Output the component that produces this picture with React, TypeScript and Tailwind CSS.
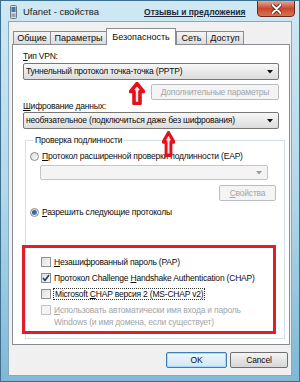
import type { ReactNode } from "react";

const font = "font-['Liberation_Sans',Arial,sans-serif]";
const txt = "text-[8.5px] tracking-[-0.2px] leading-[11px]";

function U({ children }: { children: ReactNode }) {
    return <span className="underline underline-offset-1">{children}</span>;
}

function Combo({ text, disabled }: { text?: ReactNode; disabled?: boolean }) {
    return (
        <div
            className={`flex h-full items-center rounded-[2px] border pl-[2px] pr-[5px] ${disabled
                ? "border-[#c2c5c9] bg-[#f4f4f4]"
                : "border-[#777] bg-linear-to-b from-[#f7f7f7] to-[#dcdcdc]"
                }`}
        >
            <span className={`flex-1 truncate ${txt}`}>{text}</span>
            <svg width="6" height="4" viewBox="0 0 6 4">
                <path d="M0 0 L6 0 L3 3.5 Z" fill={disabled ? "#9a9a9a" : "#111"} />
            </svg>
        </div>
    );
}

function Btn({ children, w, disabled }: { children: ReactNode; w: string; disabled?: boolean }) {
    return (
        <div
            className={`${w} flex h-[16px] items-center justify-center rounded-[2px] border ${txt} ${disabled
                ? "border-[#b9bdc1] bg-[#f4f4f4] text-[#a3a6a9]"
                : "border-[#707070] bg-linear-to-b from-[#f4f4f4] to-[#d6d6d6]"
                }`}
        >
            {children}
        </div>
    );
}

function Radio({ on }: { on?: boolean }) {
    return (
        <div className="flex h-[9px] w-[9px] shrink-0 items-center justify-center rounded-full border border-[#8a8a8a] bg-linear-to-br from-[#dcdcdc] to-[#ffffff]">
            {on && <div className="h-[5px] w-[5px] rounded-full bg-linear-to-br from-[#2a4f6b] to-[#4a8fbf]" />}
        </div>
    );
}

function Check({ on, disabled }: { on?: boolean; disabled?: boolean }) {
    return (
        <div
            className={`flex h-[10px] w-[10px] shrink-0 items-center justify-center border ${disabled
                ? "border-[#c4c4c4] bg-[#f4f4f4]"
                : "border-[#8f8f8f] bg-linear-to-br from-[#dedede] to-[#fafafa]"
                }`}
        >
            {on && (
                <svg width="8" height="8" viewBox="0 0 8 8">
                    <path d="M1 4 L3 6.5 L7 1" stroke="#1f3b73" strokeWidth="1.6" fill="none" />
                </svg>
            )}
        </div>
    );
}

function UpArrow({ w, h }: { w: number; h: number }) {
    return (
        <svg width={w} height={h} viewBox="0 0 16 24" preserveAspectRatio="none">
            <path
                d="M8 1.5 L14.5 10 L11 10 L11 22.5 L5 22.5 L5 10 L1.5 10 Z"
                fill="#fbe3e3"
                stroke="#e3111c"
                strokeWidth="3.6"
                strokeLinejoin="round"
            />
        </svg>
    );
}

const tabs = [
    { name: "Общие", w: "w-[37px]" },
    { name: "Параметры", w: "w-[56px]" },
    { name: "Безопасность", w: "w-[70px]", active: true },
    { name: "Сеть", w: "w-[30px]" },
    { name: "Доступ", w: "w-[38px]" },
];

export default function App() {
    return (
        <div
            className={`${font} relative flex h-[382px] w-[300px] flex-col overflow-hidden border border-[#3d6f90] bg-linear-to-b from-[#cfe8f4] via-[#b3d8ea] to-[#7fb8d6] text-[#0c0c0c]`}
        >
            {/* заголовок */}
            <div className="flex h-[20px] items-start">
                <svg width="7" height="14" viewBox="0 0 7 14" className="ml-[9px] mt-[4px]">
                    <rect x="0.5" y="0.5" width="6" height="13" rx="1" fill="#d8dde2" stroke="#6d7a86" />
                    <rect x="1.5" y="2" width="4" height="5" fill="#3f77b6" />
                    <rect x="1.5" y="8.5" width="4" height="3.5" fill="#9aa4ae" />
                </svg>
                <span className="ml-[6px] mt-[5px] text-[9.5px] leading-[12px] text-[#1b1b1b]">
                    Ufanet - свойства
                </span>
                <span className="ml-[45px] mt-[5px] text-[8.5px] font-bold leading-[12px] text-[#1c2b3a] underline underline-offset-1">
                    Отзывы и предложения
                </span>
                <div className="ml-auto mr-[4px] -mt-px flex h-[17px] w-[38px] items-center justify-center rounded-b-[4px] border border-[#6a2a1e] bg-linear-to-b from-[#e8a592] via-[#c8462f] to-[#d9734f]">
                    <svg width="11" height="10" viewBox="0 0 11 10">
                        <path d="M1.5 1 L9.5 9 M9.5 1 L1.5 9" stroke="#4a1a12" strokeWidth="3.6" strokeLinecap="round" />
                        <path d="M1.5 1 L9.5 9 M9.5 1 L1.5 9" stroke="#fff" strokeWidth="2" strokeLinecap="round" />
                    </svg>
                </div>
            </div>

            {/* клиентская область */}
            <div className="mx-[7px] flex h-[355px] flex-col border border-[#87a9bf] bg-[#f0f0f0]">
                {/* вкладки */}
                <div className="ml-[4px] mt-[6px] flex h-[16px] items-end">
                    {tabs.map((t) =>
                        t.active ? (
                            <div
                                key={t.name}
                                className={`${t.w} relative z-10 -mb-px flex h-[17px] items-start justify-center border-x border-t border-[#898c95] bg-white pt-[3px] text-[9px] leading-[11px]`}
                            >
                                {t.name}
                            </div>
                        ) : (
                            <div
                                key={t.name}
                                className={`${t.w} flex h-[13px] items-center justify-center border-l border-t border-[#898c95] bg-linear-to-b from-[#f4f4f4] to-[#dcdcdc] text-[9px] leading-[11px] last:border-r`}
                            >
                                {t.name}
                            </div>
                        )
                    )}
                </div>

                {/* панель */}
                <div className={`relative ml-[3px] flex h-[301px] w-[278px] flex-col border border-[#898c95] bg-white px-[10px] ${txt}`}>
                    <div className="mt-[6px] h-[11px]">
                        <U>Т</U>ип VPN:
                    </div>
                    <div className="mt-[1px] h-[17px]">
                        <Combo text="Туннельный протокол точка-точка (PPTP)" />
                    </div>
                    <div className="mt-[4px] flex justify-end">
                        <Btn w="w-[128px]" disabled>
                            <U>Д</U>ополнительные параметры
                        </Btn>
                    </div>
                    <div className="mt-[1px] h-[11px]">
                        <U>Ш</U>ифрование данных:
                    </div>
                    <div className="h-[17px]">
                        <Combo text="необязательное (подключиться даже без шифрования)" />
                    </div>

                    {/* проверка подлинности */}
                    <fieldset className="ml-[2px] mt-[6px] flex flex-col border border-[#d5dfe5] pb-[4px] pl-[4px] pr-[8px]">
                        <legend className="ml-[3px] px-[2px]">Проверка подлинности</legend>
                        <div className="mt-[5px] flex h-[11px] items-center gap-[3px]">
                            <Radio />
                            <span>
                                <U>П</U>ротокол расширенной проверки подлинности (EAP)
                            </span>
                        </div>
                        <div className="ml-[10px] mt-[3px] h-[15px] w-[228px]">
                            <Combo disabled />
                        </div>
                        <div className="mt-[5px] flex justify-end">
                            <Btn w="w-[57px]" disabled>
                                <U>С</U>войства
                            </Btn>
                        </div>
                        <div className="mt-[6px] flex h-[11px] items-center gap-[3px]">
                            <Radio on />
                            <span>
                                <U>Р</U>азрешить следующие протоколы
                            </span>
                        </div>

                        {/* красная рамка */}
                        <div className="-ml-[8px] mt-[27px] flex h-[89px] w-[254px] flex-col border-[3px] border-[#de1f2b] pl-[16px] pt-[6px]">
                            <div className="flex h-[16px] items-center gap-[3px]">
                                <Check />
                                <span>
                                    <U>Н</U>езашифрованный пароль (PAP)
                                </span>
                            </div>
                            <div className="flex h-[16px] items-center gap-[3px] whitespace-nowrap">
                                <Check on />
                                <span>
                                    Протокол Challenge <U>H</U>andshake Authentication (CHAP)
                                </span>
                            </div>
                            <div className="flex h-[16px] items-center gap-[2px]">
                                <Check />
                                <span className="border border-dotted border-[#333] px-px leading-[10px]">
                                    Microsoft <U>C</U>HAP версия 2 (MS-CHAP v2)
                                </span>
                            </div>
                            <div className="mt-[2px] flex items-start gap-[3px] text-[#a2a5a8]">
                                <div className="mt-[1px]">
                                    <Check disabled />
                                </div>
                                <span className="leading-[12px]">
                                    <U>И</U>спользовать автоматически имя входа и пароль
                                    <br />
                                    Windows (и имя домена, если существует)
                                </span>
                            </div>
                        </div>
                    </fieldset>

                    {/* стрелки */}
                    <div className="absolute left-[116px] top-[37px]">
                        <UpArrow w={16} h={23} />
                    </div>
                    <div className="absolute left-[149px] top-[86px]">
                        <UpArrow w={13} h={26} />
                    </div>
                </div>

                {/* кнопки */}
                <div className="mt-[7px] flex justify-end gap-[3px] pr-[3px]">
                    <div className={`flex h-[16px] w-[61px] items-center justify-center rounded-[2px] border border-[#3c7fb1] bg-linear-to-b from-[#eef6fb] to-[#cfe6f5] shadow-[inset_0_0_0_1px_#a7d8f5] ${txt}`}>
                        OK
                    </div>
                    <Btn w="w-[58px]">Cancel</Btn>
                </div>
            </div>
        </div>
    );
}
